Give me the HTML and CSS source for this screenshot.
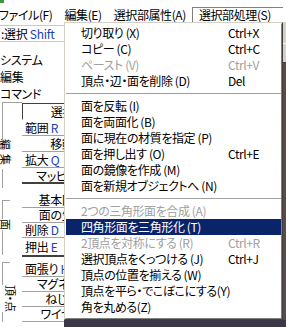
FILE: index.html
```html
<!DOCTYPE html>
<html>
<head>
  <title>選択部処理</title>
  <link rel="stylesheet" href="styles.css">
</head>
<body>
  <div class="app">
    <div class="topstrip"><span class="appicon"></span></div>

    <div class="menubar">
      <span class="mb-item">ファイル(F)</span>
      <span class="mb-item">編集(E)</span>
      <span class="mb-item">選択部属性(A)</span>
      <span class="mb-item open">選択部処理(S)</span>
    </div>

    <div class="main">
      <div class="panel">
        <div class="modebar">:選択 <span class="key">Shift</span></div>
        <div class="ptabs">
          <div class="ptab">システム</div>
          <div class="ptab">編集</div>
          <div class="ptab">コマンド</div>
        </div>

        <div class="group g1">
          <div class="gside">
            <div class="fr-top wide"></div>
            <div class="gtitle">編集</div>
            <div class="fr-bot"></div>
          </div>
          <div class="gbtns">
            <div class="btn c pressed">選択</div>
            <div class="btn">範囲 <span class="key">R</span></div>
            <div class="btn c">移動</div>
            <div class="btn">拡大 <span class="key">Q</span></div>
            <div class="btn c end">マッピング</div>
          </div>
        </div>

        <div class="group g2">
          <div class="gside">
            <div class="fr-top"></div>
            <div class="gtitle">面</div>
            <div class="fr-bot"></div>
          </div>
          <div class="gbtns">
            <div class="btn c">基本図形</div>
            <div class="btn c">面の生成</div>
            <div class="btn">削除 <span class="key">D</span></div>
            <div class="btn end">押出 <span class="key">E</span></div>
          </div>
        </div>

        <div class="group g3">
          <div class="gside">
            <div class="fr-top"></div>
            <div class="gtitle">頂・点</div>
            <div class="fr-bot"></div>
          </div>
          <div class="gbtns">
            <div class="btn">面張り <span class="key">H</span></div>
            <div class="btn c">マグネット</div>
            <div class="btn c">ねじれ</div>
            <div class="btn c">ワイヤー</div>
          </div>
        </div>
      </div>

      <div class="view">
        <div class="vtool-a"></div>
        <div class="vtool-b"></div>
        <div class="v3d"></div>
        <div class="vfoot"></div>
      </div>
    </div>

    <!-- dropdown of 選択部処理 -->
    <div class="menu">
      <div class="menu-in">
        <div class="mi"><span>切り取り (X)</span><span>Ctrl+X</span></div>
        <div class="mi"><span>コピー (C)</span><span>Ctrl+C</span></div>
        <div class="mi off"><span>ペースト (V)</span><span>Ctrl+V</span></div>
        <div class="mi"><span>頂点・辺・面を削除 (D)</span><span>Del</span></div>
        <div class="msep"></div>
        <div class="mi"><span>面を反転 (I)</span></div>
        <div class="mi"><span>面を両面化 (B)</span></div>
        <div class="mi"><span>面に現在の材質を指定 (P)</span></div>
        <div class="mi"><span>面を押し出す (O)</span><span>Ctrl+E</span></div>
        <div class="mi"><span>面の鏡像を作成 (M)</span></div>
        <div class="mi"><span>面を新規オブジェクトへ (N)</span></div>
        <div class="msep"></div>
        <div class="mi off"><span>2つの三角形面を合成 (A)</span></div>
        <div class="mi sel"><span>四角形面を三角形化 (T)</span></div>
        <div class="mi off"><span>2頂点を対称にする (R)</span><span>Ctrl+R</span></div>
        <div class="mi"><span>選択頂点をくっつける (J)</span><span>Ctrl+J</span></div>
        <div class="mi"><span>頂点の位置を揃える (W)</span></div>
        <div class="mi"><span>頂点を平ら・でこぼこにする(Y)</span></div>
        <div class="mi"><span>角を丸める(Z)</span></div>
      </div>
    </div>
  </div>
</body>
</html>
```

FILE: styles.css
```css
body {
  margin: 0;
  width: 286px;
  height: 327px;
  overflow: hidden;
  background-color: #ffffff;
  color: #000000;
  font-family: "Noto Sans CJK JP", "Noto Sans", sans-serif;
  font-size: 12px;
  font-feature-settings: "palt";
}
.app {
  position: relative;
  width: 286px;
  height: 327px;
  overflow: hidden;
}
.topstrip {
  height: 4px;
}
.appicon {
  display: block;
  width: 4px;
  height: 3px;
  background-color: #3a9a3a;
}

/* menu bar */
.menubar {
  display: flex;
  align-items: flex-end;
  height: 18px;
  margin-left: -7px;
  letter-spacing: -0.4px;
  white-space: nowrap;
}
.mb-item {
  height: 14px;
  line-height: 14px;
  padding: 0 6px;
}
.mb-item.open {
  padding-right: 12px;
  border-left: 1px solid #808080;
  border-top: 1px solid #808080;
}

.main {
  display: flex;
  height: 305px;
}

/* command panel */
.panel {
  width: 64px;
  flex: none;
  overflow: hidden;
  letter-spacing: -0.3px;
}
.modebar {
  margin-top: 3px;
  height: 15px;
  line-height: 15px;
  padding-left: 1px;
  border-top: 1px solid #c8c8c8;
  border-bottom: 1px solid #c8c8c8;
  white-space: nowrap;
}
.key {
  color: #1c3fb4;
}
.ptabs {
  margin-top: 9px;
}
.ptab {
  height: 17px;
  line-height: 17px;
  white-space: nowrap;
}
.group {
  display: flex;
}
.gside {
  width: 20px;
  flex: none;
  margin-left: 2px;
  display: flex;
  flex-direction: column;
  align-items: flex-start;
}
.fr-top {
  width: 7px;
  border-left: 1px solid #a0a0a0;
  border-top: 1px solid #a0a0a0;
}
.fr-top.wide {
  width: 19px;
}
.fr-bot {
  flex: 1;
  width: 7px;
  border-left: 1px solid #a0a0a0;
}
.gtitle {
  writing-mode: vertical-rl;
  text-orientation: sideways;
  font-size: 11px;
  line-height: 11px;
  margin-left: -2px;
  background-color: #ffffff;
}
.gbtns {
  width: 80px;
  flex: none;
}
.btn {
  height: 14px;
  line-height: 14px;
  padding-left: 3px;
  border-bottom: 1px solid #a0a0a0;
  white-space: nowrap;
  overflow: hidden;
}
.btn.c {
  text-align: center;
  padding-left: 0;
}
.btn.pressed {
  border-top: 1px solid #404040;
  border-left: 1px solid #404040;
  border-bottom-color: #ffffff;
}
.btn.end {
  border-bottom: 2px solid #404040;
}

.g1 {
  height: 86px;
}
.g1 .fr-top {
  height: 36px;
}
.g1 .gtitle {
  letter-spacing: 4px;
}
.g1 .gbtns {
  margin-top: 1px;
}
.g1 .btn {
  height: 15px;
  line-height: 15px;
}
.g1 .btn.end {
  height: 14px;
}

.g2 {
  margin-top: 5px;
}
.g2 .gside {
  padding-top: 7px;
  padding-bottom: 2px;
}
.g2 .fr-top {
  height: 18px;
}
.g2 .btn.end {
  height: 17px;
  line-height: 17px;
}

.g3 {
  margin-top: 5px;
}
.g3 .fr-top {
  height: 22px;
}
.g3 .gtitle {
  margin-left: 3px;
}

/* 3d view behind the menu */
.view {
  flex: 1;
  display: flex;
  flex-direction: column;
}
.vtool-a {
  height: 21px;
  background-color: #d4d0c8;
  border-bottom: 1px solid #ffffff;
}
.vtool-b {
  height: 18px;
  background-color: #d4d0c8;
  border-bottom: 1px solid #404040;
}
.v3d {
  flex: 1;
  background: linear-gradient(#6a4636, #574a52);
}
.vfoot {
  height: 7px;
  background-color: #3d3848;
}

/* dropdown menu */
.menu {
  position: absolute;
  left: 64px;
  top: 22px;
  width: 219px;
  box-sizing: border-box;
  background-color: #ffffff;
  border: 1px solid;
  border-color: #d4d0c8 #404040 #404040 #d4d0c8;
  letter-spacing: -0.4px;
}
.menu-in {
  padding: 1px 0 3px;
  border: 1px solid;
  border-color: #ffffff #808080 #808080 #ffffff;
}
.mi {
  display: grid;
  grid-template-columns: 147px auto;
  height: 16px;
  line-height: 16px;
  padding-left: 15px;
  white-space: nowrap;
}
.mi.off {
  color: #a0a0a0;
}
.mi.sel {
  background-color: #0a246a;
  color: #ffffff;
}
.msep {
  margin: 4px 0 3px;
  border-top: 1px solid #a0a0a0;
  border-bottom: 1px solid #ffffff;
}
```
